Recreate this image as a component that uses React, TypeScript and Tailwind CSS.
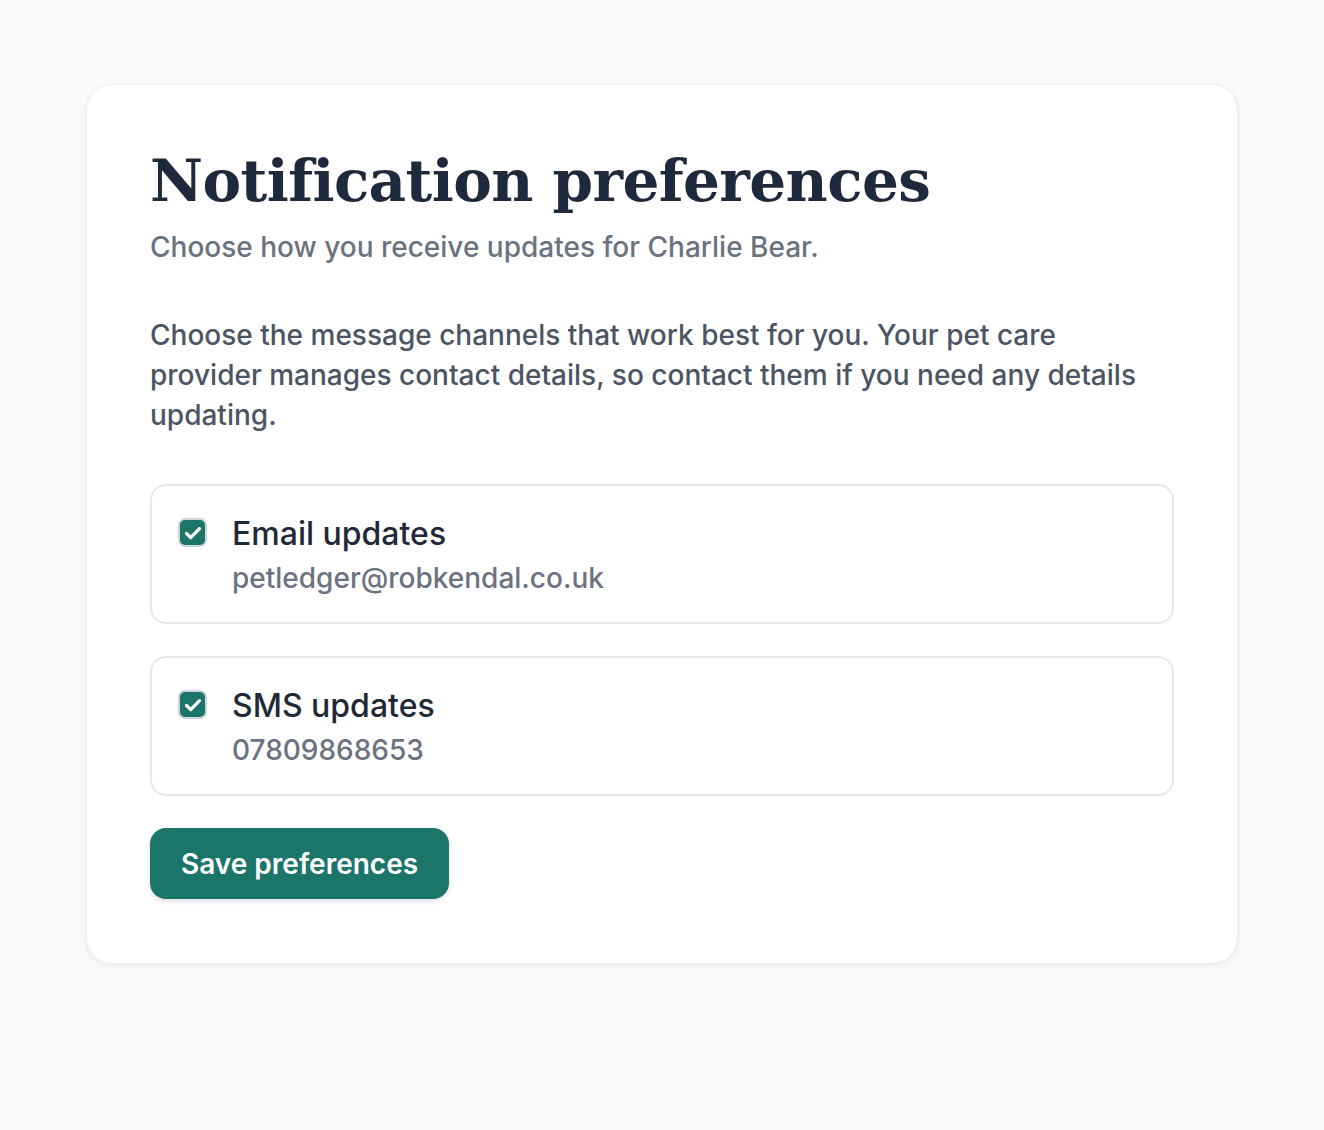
import { useState } from "react";

type Channel = {
  id: string;
  label: string;
  detail: string;
};

const channels: Channel[] = [
  { id: "email", label: "Email updates", detail: "petledger@robkendal.co.uk" },
  { id: "sms", label: "SMS updates", detail: "07809868653" },
];

function CheckIcon() {
  return (
    <svg viewBox="0 0 16 16" className="h-[20px] w-[20px]" fill="none">
      <path
        d="M2.8 8.4l3.4 3.3 7-7.2"
        stroke="white"
        strokeWidth="2.6"
        strokeLinecap="round"
        strokeLinejoin="round"
      />
    </svg>
  );
}

export default function App() {
  const [checked, setChecked] = useState<Record<string, boolean>>({
    email: true,
    sms: true,
  });

  return (
    <div
      className="min-h-screen bg-[#f8f9fb] px-[86px] pt-[84px] pb-[166px]"
      style={{ fontFamily: "Inter, 'Noto Sans', sans-serif" }}
    >
      <div className="rounded-[26px] border border-[#eceef1] bg-white px-[63px] pt-[62px] pb-[64px] shadow-[0_2px_6px_rgba(15,23,42,0.06)]">
        <h1
          className="text-[58px] leading-[68px] font-bold tracking-[-0.6px] text-[#1e293b]"
          style={{ fontFamily: "'DejaVu Serif', 'Liberation Serif', serif" }}
        >
          Notification preferences
        </h1>
        <p className="mt-[14px] text-[28px] leading-[36px] font-medium text-[#6b7280]">
          Choose how you receive updates for Charlie Bear.
        </p>

        <p className="mt-[50px] text-[28px] leading-[40px] font-medium text-[#4b5563]">
          Choose the message channels that work best for you. Your pet care
          provider manages contact details, so contact them if you need any
          details updating.
        </p>

        <div className="mt-[49px] flex flex-col gap-[32px]">
          {channels.map((c) => (
            <label
              key={c.id}
              className="flex cursor-pointer items-start gap-[25px] rounded-[16px] border-2 border-[#e5e7eb] px-[26px] pt-[28px] pb-[25px]"
            >
              <button
                type="button"
                onClick={() =>
                  setChecked((s) => ({ ...s, [c.id]: !s[c.id] }))
                }
                className={`mt-[4px] flex h-[29px] w-[29px] shrink-0 items-center justify-center rounded-[7px] border-2 ${
                  checked[c.id]
                    ? "border-[#d1d5db] bg-[#1b7569]"
                    : "border-[#d1d5db] bg-white"
                }`}
              >
                {checked[c.id] && <CheckIcon />}
              </button>
              <div className="flex flex-col">
                <span className="text-[32px] leading-[40px] font-medium text-[#1f2937]">
                  {c.label}
                </span>
                <span className="mt-[5px] text-[28px] leading-[38px] font-medium text-[#6b7280]">
                  {c.detail}
                </span>
              </div>
            </label>
          ))}
        </div>

        <button
          type="button"
          className="mt-[32px] h-[71px] rounded-[16px] bg-[#1b7569] px-[31px] text-[28px] font-semibold text-white shadow-[0_2px_5px_rgba(15,23,42,0.15)]"
        >
          Save preferences
        </button>
      </div>
    </div>
  );
}
